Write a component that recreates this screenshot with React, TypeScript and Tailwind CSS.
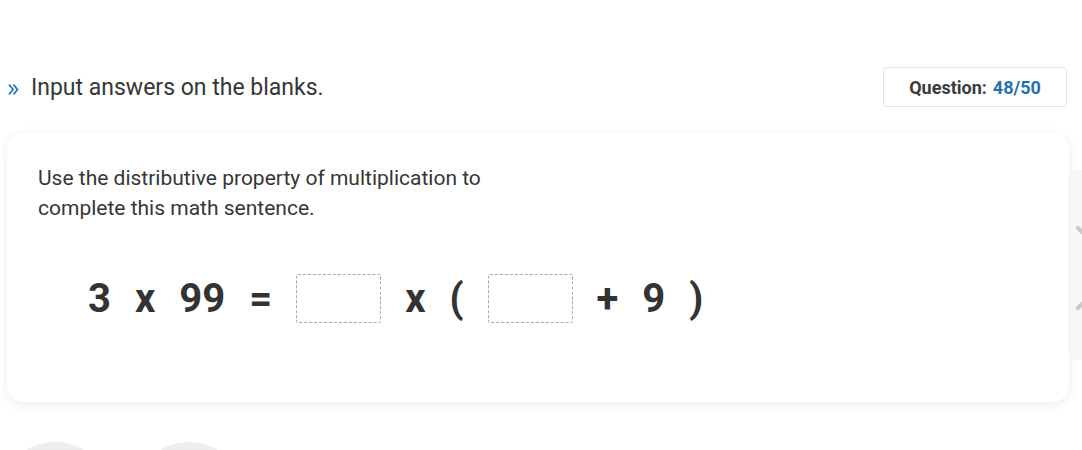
import React from "react";

const font = { fontFamily: "Roboto, 'Liberation Sans', sans-serif" };

const Blank: React.FC = () => (
  <div className="w-[85px] h-[49px] border border-dashed border-[#a9a9a9] rounded-[2px] bg-white" />
);

const App: React.FC = () => {
  const tokens: (string | null)[] = ["3", "x", "99", "=", null, "x", "(", null, "+", "9", ")"];

  return (
    <div className="relative w-[1082px] h-[450px] overflow-hidden bg-white" style={font}>
      <div className="pt-[67px] pl-[7px] w-[1076px]">
        {/* Header */}
        <div className="flex items-center justify-between h-[40px] pr-[9px]">
          <div className="flex items-center pt-[3px] text-[23px] text-[#363636]">
            <svg width="11" height="13" viewBox="0 0 11 13" className="ml-[1px] mr-[12px] mt-[1px]" fill="none" stroke="#1e73b8" strokeWidth="1.7">
              <path d="M1 1.5 L5 6.5 L1 11.5" />
              <path d="M5.5 1.5 L9.5 6.5 L5.5 11.5" />
            </svg>
            <span>Input answers on the blanks.</span>
          </div>
          <div className="w-[184px] h-[40px] flex items-center justify-center border border-[#e3e3e3] rounded-[4px] bg-white text-[18px] font-bold text-[#3b3b3b]">
            <span>Question:</span>
            <span className="ml-[6px] text-[#1e73b0]">48/50</span>
          </div>
        </div>

        {/* Card */}
        <div className="mt-[26px] w-[1062px] h-[269px] rounded-[16px] bg-white shadow-[0_2px_12px_rgba(0,0,0,0.08)] pt-[30px] pl-[31px]">
          <p className="text-[21px] leading-[30px] text-[#363636] w-[470px]">
            Use the distributive property of multiplication to complete this math sentence.
          </p>
          <div className="flex items-center gap-[24px] mt-[51px] pl-[50px] text-[40px] font-bold text-[#333333] leading-none">
            {tokens.map((t, i) =>
              t === null ? <Blank key={i} /> : <span key={i}>{t}</span>
            )}
          </div>
        </div>

        {/* Options row */}
        <div className="flex gap-[24px] mt-[40px] -ml-[7px]">
          <div className="w-[110px] h-[110px] rounded-full bg-[#eeeeee]" />
          <div className="w-[110px] h-[110px] rounded-full bg-[#eeeeee]" />
        </div>
      </div>

      {/* next arrow, cut by the viewport */}
      <div className="absolute left-[1068px] top-[170px] w-[60px] h-[190px] rounded-[8px] bg-[#f6f6f6]">
        <svg width="60" height="190" viewBox="0 0 60 190" fill="none" stroke="#c9c9c9" strokeWidth="4" strokeLinecap="round">
          <path d="M10 58 L50 98 L10 138" />
        </svg>
      </div>
    </div>
  );
};

export default App;
